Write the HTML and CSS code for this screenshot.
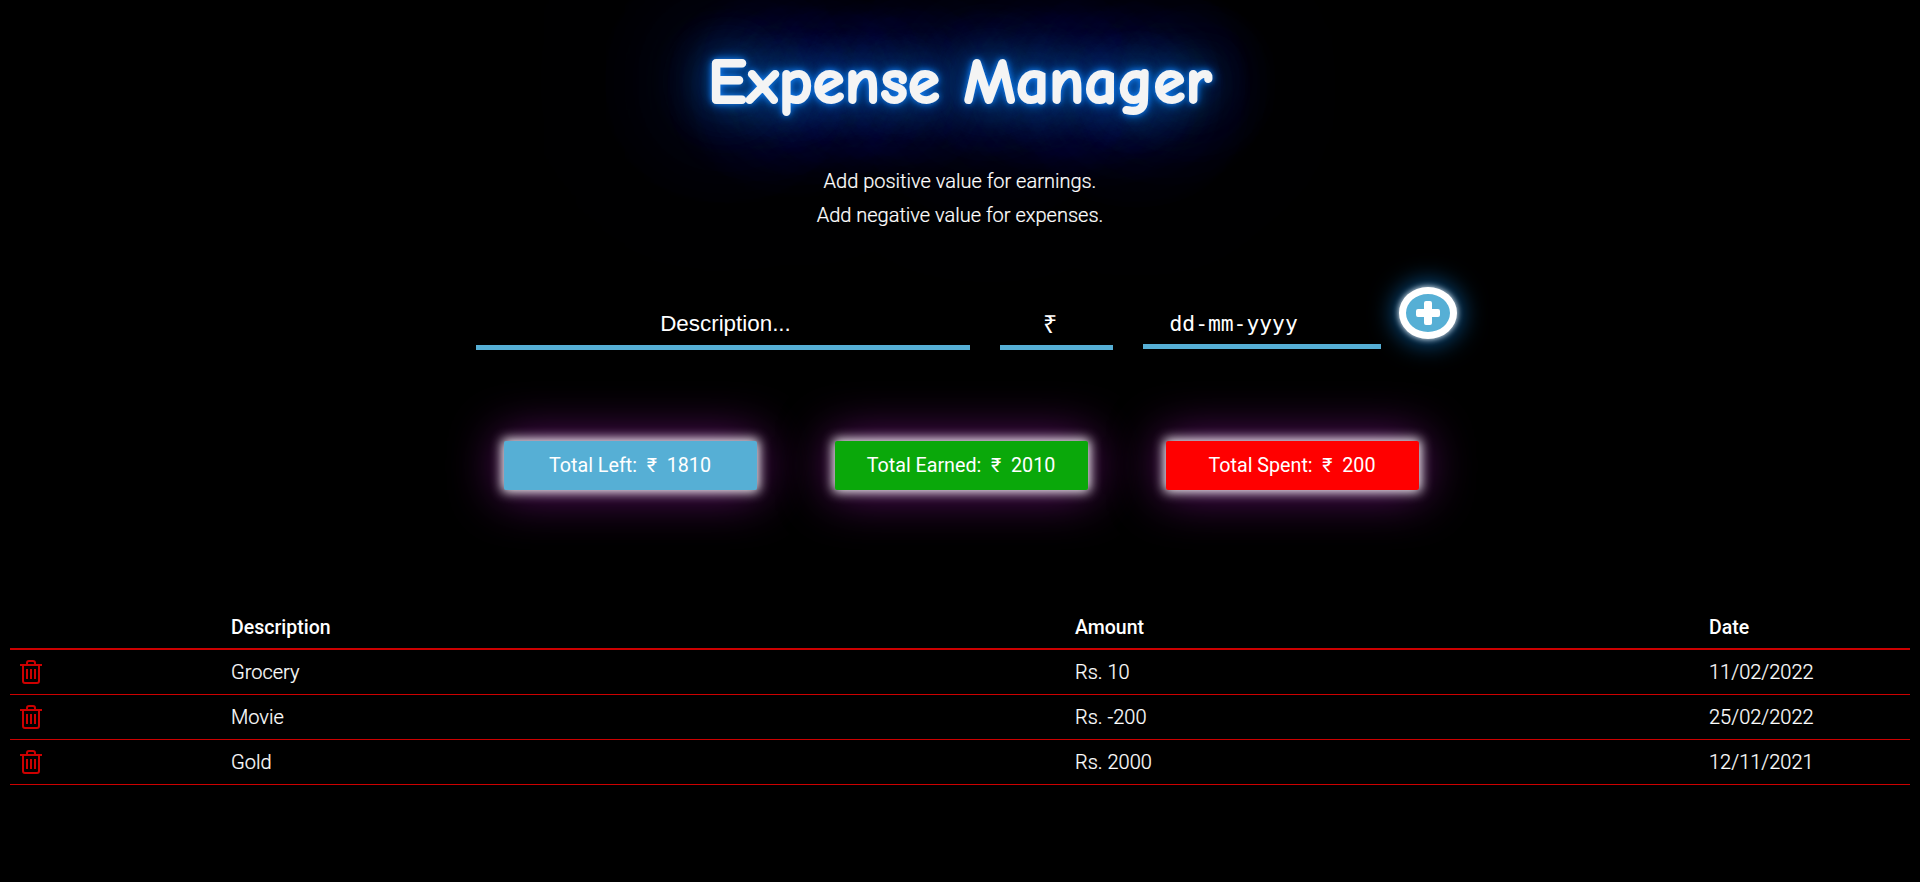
FILE: index.html
```html
<!DOCTYPE html>
<html lang="en">
<head>
    <meta charset="UTF-8">
    <meta name="viewport" content="width=device-width, initial-scale=1.0">
    <title>Expense Manager</title>
    <link rel="stylesheet" href="styles.css">
</head>
<body>

<header class="top">
    <h1 class="title">Expense Manager</h1>
    <p class="hint">Add positive value for earnings.</p>
    <p class="hint">Add negative value for expenses.</p>
</header>

<form class="entry">
    <input class="field field-desc" type="text" placeholder="Description...">
    <input class="field field-amount" type="text" placeholder="₹">
    <input class="field field-date" type="text" value="dd-mm-yyyy">
    <button class="add" type="button" aria-label="Add">
        <svg width="26" height="26" viewBox="0 0 26 26"><path d="M11 1h4q2 0 2 2v6h6q2 0 2 2v4q0 2-2 2h-6v6q0 2-2 2h-4q-2 0-2-2v-6H3q-2 0-2-2v-4q0-2 2-2h6V3q0-2 2-2z" fill="#fff"/></svg>
    </button>
</form>

<section class="totals">
    <div class="total total-left">Total Left:&nbsp; ₹&nbsp; 1810</div>
    <div class="total total-earned">Total Earned:&nbsp; ₹&nbsp; 2010</div>
    <div class="total total-spent">Total Spent:&nbsp; ₹&nbsp; 200</div>
</section>

<table class="list">
    <thead>
        <tr>
            <th class="col-del"></th>
            <th class="col-desc">Description</th>
            <th class="col-amount">Amount</th>
            <th class="col-date">Date</th>
        </tr>
    </thead>
    <tbody>
        <tr>
            <td><svg class="trash" viewBox="0 0 22 24"><use href="#trash"/></svg></td>
            <td>Grocery</td>
            <td>Rs. 10</td>
            <td>11/02/2022</td>
        </tr>
        <tr>
            <td><svg class="trash" viewBox="0 0 22 24"><use href="#trash"/></svg></td>
            <td>Movie</td>
            <td>Rs. -200</td>
            <td>25/02/2022</td>
        </tr>
        <tr>
            <td><svg class="trash" viewBox="0 0 22 24"><use href="#trash"/></svg></td>
            <td>Gold</td>
            <td>Rs. 2000</td>
            <td>12/11/2021</td>
        </tr>
    </tbody>
</table>

<svg class="defs" width="0" height="0">
    <symbol id="trash" viewBox="0 0 22 24">
        <g fill="none" stroke="#c00" stroke-width="2">
            <path d="M0 5h22"/>
            <path d="M7 5V3q0-2 2-2h4q2 0 2 2v2"/>
            <path d="M3 5v16q0 2 2 2h12q2 0 2-2V5"/>
            <path d="M7 9v10M11 9v10M15 9v10"/>
        </g>
    </symbol>
</svg>

</body>
</html>
```

FILE: styles.css
```css
body {
    margin: 0;
    padding: 0 10px;
    background-color: #000;
    color: #fff;
    font-family: Roboto, Arial, sans-serif;
    font-weight: 300;
}
.top {
    text-align: center;
    padding-top: 44px;
}
.title {
    margin: 0 0 44px;
    font-family: "Comic Sans MS", "Comic Neue", cursive, "DejaVu Sans", sans-serif;
    font-size: 65px;
    line-height: 76px;
    font-weight: 700;
    color: #f4f4f4;
    -webkit-text-stroke: 2px #f4f4f4;
    letter-spacing: 0.15px;
    text-shadow: 0 0 6px #1c8cff, 0 0 12px #0a7cff, 0 0 40px #0078d0, 0 0 80px #0070c0, 0 0 100px #0070c0, 0 0 120px #0070c0, 0 0 150px #0068b0, 0 0 180px #0068b0, 0 0 200px #0068b0;
}
.hint {
    margin: 0;
    font-size: 20px;
    line-height: 34px;
    -webkit-text-stroke: 0.2px #fff;
}
.entry {
    display: flex;
    align-items: flex-end;
    justify-content: center;
    margin: 55px 0 0 12px;
}
.field {
    box-sizing: border-box;
    height: 50px;
    padding: 3px 0 0;
    border: none;
    border-bottom: 5px solid #56afd5;
    outline: none;
    background: none;
    color: #fff;
    text-align: center;
    font-family: "Liberation Sans", Arial, sans-serif;
    font-size: 22.4px;
}
.field::placeholder {
    color: #fff;
    opacity: 1;
}
.field-desc {
    width: 494px;
    margin-right: 30px;
    padding-left: 6px;
}
.field-amount {
    width: 113px;
    margin-right: 30px;
    padding-right: 13px;
    font-size: 25px;
}
.field-date {
    width: 238px;
    margin-right: 18px;
    margin-bottom: 1px;
    padding-left: 27px;
    text-align: left;
    font-family: "DejaVu Sans Mono", monospace;
    font-size: 21.3px;
}
.add {
    box-sizing: border-box;
    display: flex;
    align-items: center;
    justify-content: center;
    width: 58px;
    height: 52px;
    margin-bottom: 11px;
    padding: 0;
    border: 7px solid #fff;
    border-radius: 50%;
    background-color: #56afd5;
    box-shadow: 0 0 6px #fff, 0 0 26px 4px #0a5c9c;
}
.totals {
    display: flex;
    justify-content: center;
    gap: 78px;
    margin: 91px 0 0 2px;
}
.total {
    box-sizing: border-box;
    width: 253px;
    height: 49px;
    line-height: 49px;
    text-align: center;
    font-size: 19.7px;
    font-weight: 400;
    border-radius: 2px;
    box-shadow: 0 0 12px 2px #fff, 0 0 50px 5px #60106a;
}
.total-left {
    background-color: #56afd5;
}
.total-earned {
    background-color: #0aa80a;
}
.total-spent {
    background-color: #f00;
}
.list {
    width: 1900px;
    margin-top: 116px;
    border-collapse: collapse;
    table-layout: fixed;
    font-size: 20px;
    -webkit-text-stroke: 0.2px #fff;
}
.list th,
.list td {
    height: 44px;
    padding: 0 10px;
    text-align: left;
    border-bottom: 1px solid #c00;
}
.list th {
    height: 42px;
    font-size: 19.5px;
    font-weight: 500;
    -webkit-text-stroke: 0;
    border-bottom-width: 2px;
}
.list td svg {
    display: block;
}
.col-del {
    width: 191px;
}
.col-desc {
    width: 824px;
}
.col-amount {
    width: 614px;
}
.trash {
    width: 22px;
    height: 24px;
}
.defs {
    position: absolute;
}
```
